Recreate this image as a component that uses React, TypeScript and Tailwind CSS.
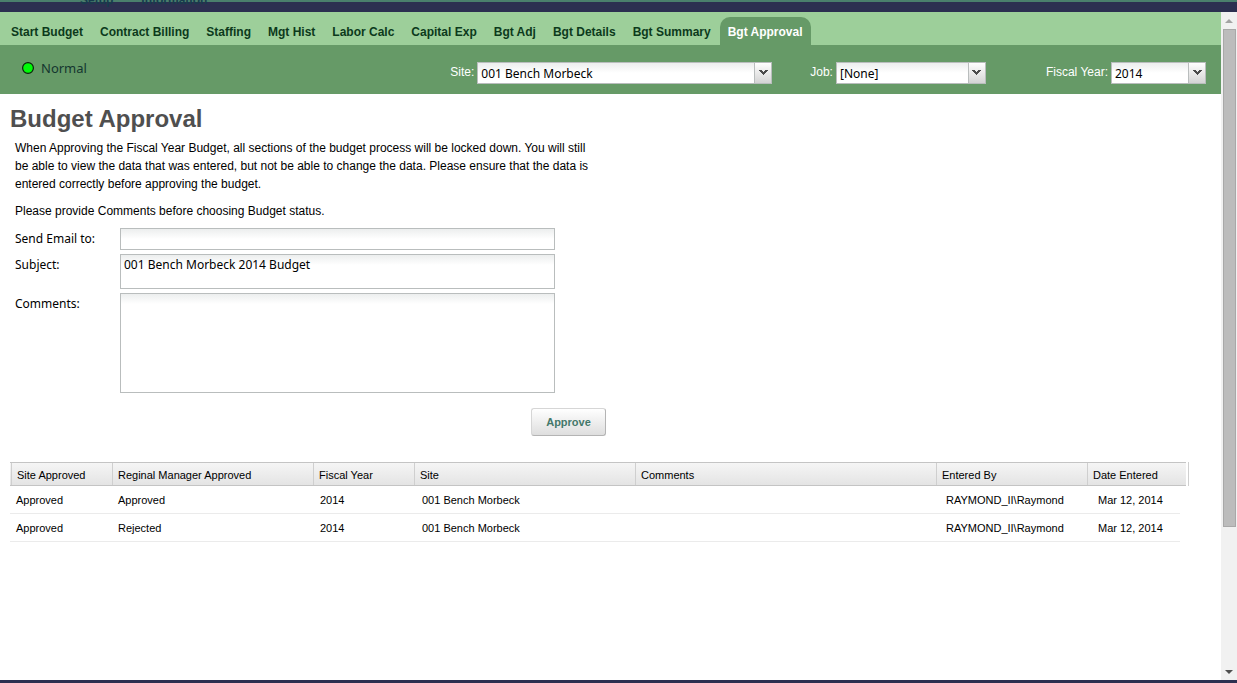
import { useState, type ReactNode } from "react";

const TABS = [
  "Start Budget",
  "Contract Billing",
  "Staffing",
  "Mgt Hist",
  "Labor Calc",
  "Capital Exp",
  "Bgt Adj",
  "Bgt Details",
  "Bgt Summary",
  "Bgt Approval",
];

const ROWS = [
  { site: "Approved", manager: "Approved" },
  { site: "Approved", manager: "Rejected" },
];

const FIELD =
  "block w-full resize-none border border-[#b9bdbd] bg-white bg-linear-to-b from-[#eceeee] to-white to-[10px] px-[3px] font-['Noto_Sans',sans-serif] text-[12px] text-black outline-none";

function Picker({ id, label, value, width }: { id: string; label: string; value: string; width: string }) {
  return (
    <div className="flex items-center gap-[3px]">
      <label htmlFor={id} className="pb-[2px] text-[12px] leading-4 text-white">
        {label}
      </label>
      <div className={`relative ${width}`}>
        <select
          id={id}
          defaultValue={value}
          className="block h-[22px] w-full appearance-none border border-[#b9bdbd] bg-white bg-linear-to-b from-[#eceeee] to-white to-[10px] pt-px pr-5 pl-[3px] font-['Noto_Sans',sans-serif] text-[12px] text-black outline-none"
        >
          <option>{value}</option>
        </select>
        <span className="pointer-events-none absolute inset-y-px right-px flex w-[17px] items-center justify-center border-l border-[#b9bdbd] bg-linear-to-b from-white to-[#d4d4d4]">
          <svg width="9" height="6" viewBox="0 0 9 6" shapeRendering="crispEdges" aria-hidden="true">
            <path d="M0 0h3v1h1v1h1v-1h1v-1h3v1h-1v1h-1v1h-1v1h-1v1h-1v-1h-1v-1h-1v-1h-1v-1h-1z" fill="#4a4a4a" />
          </svg>
        </span>
      </div>
    </div>
  );
}

function FormRow({ id, label, children }: { id: string; label: string; children: ReactNode }) {
  return (
    <>
      <label htmlFor={id} className="pt-[2px] font-['Noto_Sans',sans-serif] text-[12px] leading-[18px]">
        {label}
      </label>
      {children}
    </>
  );
}

function HeadCell({
  children,
  className = "",
  colSpan,
}: {
  children: ReactNode;
  className?: string;
  colSpan?: number;
}) {
  return (
    <th
      scope="col"
      colSpan={colSpan}
      className={`h-6 border-y border-[#c4c4c4] bg-linear-to-b from-[#f5f5f5] to-[#e4e4e4] p-0 text-left font-normal ${className}`}
    >
      <span className="block border-l border-[#cfcfcf] pt-[2px] pl-[5px] leading-5">{children}</span>
    </th>
  );
}

function Scrollbar() {
  return (
    <div className="flex w-4 shrink-0 flex-col bg-[#f1f1f1]" aria-hidden="true">
      <div className="flex h-[17px] items-center justify-center">
        <svg width="8" height="4" viewBox="0 0 8 4">
          <path d="M4 0L8 4H0z" fill="#a3a3a3" />
        </svg>
      </div>
      <div className="flex-1 pr-px pl-[2px]">
        <div className="h-[78.5%] border border-[#a8a8a8] bg-[#bcbcbc]" />
      </div>
      <div className="flex h-[17px] items-center justify-center">
        <svg width="8" height="4" viewBox="0 0 8 4">
          <path d="M0 0H8L4 4z" fill="#505050" />
        </svg>
      </div>
    </div>
  );
}

export default function App() {
  const [active, setActive] = useState("Bgt Approval");

  return (
    <div className="flex min-h-screen flex-col bg-white font-['Liberation_Sans',Arial,sans-serif] text-black">
      <header className="flex h-3 items-end gap-7 overflow-hidden bg-linear-to-b from-[#4a7f6c] from-[2px] to-[#2c2f50] to-[2px] pb-1 pl-20 text-[12px] font-bold leading-4 text-[#173c4c]">
        <span>Setup</span>
        <span>Information</span>
      </header>

      <div className="flex flex-1">
        <div className="min-w-0 flex-1">
          <nav className="flex h-[33px] items-end gap-px bg-[#9dcf9a] pl-[3px]">
            {TABS.map((tab) => (
              <a
                key={tab}
                href="#"
                onClick={() => setActive(tab)}
                className={`flex h-7 items-center rounded-t-[10px] px-2 pt-[2px] text-[12px] font-bold leading-4 whitespace-nowrap ${
                  tab === active ? "bg-[#669a67] text-white" : "text-[#0c3a1c]"
                }`}
              >
                {tab}
              </a>
            ))}
          </nav>

          <div className="flex h-[49px] items-center bg-[#669a67] pr-[15px] pl-[22px]">
            <div className="flex items-center gap-[7px] pb-1 font-['Noto_Sans',sans-serif] text-[13px] leading-4 text-[#14362f]">
              <svg width="12" height="12" viewBox="0 0 12 12" aria-hidden="true">
                <circle cx="6" cy="6" r="5.4" fill="#00fb08" stroke="#0b220b" strokeWidth="1.2" />
              </svg>
              Normal
            </div>
            <div className="ml-auto flex items-center pt-[7px]">
              <Picker id="site" label="Site:" value="001 Bench Morbeck" width="w-[295px]" />
              <div className="w-[38px]" />
              <Picker id="job" label="Job:" value="[None]" width="w-[150px]" />
              <div className="w-[60px]" />
              <Picker id="year" label="Fiscal Year:" value="2014" width="w-[95px]" />
            </div>
          </div>

          <main className="pr-8 pl-[10px]">
            <h1 className="pt-[10px] text-[24px] font-bold leading-[30px] text-[#4f4f4f]">Budget Approval</h1>
            <div className="max-w-[590px] pt-[5px] pl-[5px] text-[12px] leading-[18px]">
              <p>
                When Approving the Fiscal Year Budget, all sections of the budget process will be locked down. You will
                still be able to view the data that was entered, but not be able to change the data. Please ensure that
                the data is entered correctly before approving the budget.
              </p>
              <p className="pt-[9px]">Please provide Comments before choosing Budget status.</p>
            </div>

            <form className="max-w-[596px] pt-2" onSubmit={(e) => e.preventDefault()}>
              <div className="grid grid-cols-[105px_435px] items-start gap-y-1 pl-[5px]">
                <FormRow id="email" label="Send Email to:">
                  <input id="email" type="text" className={`${FIELD} h-[22px]`} />
                </FormRow>
                <FormRow id="subject" label="Subject:">
                  <textarea
                    id="subject"
                    defaultValue="001 Bench Morbeck 2014 Budget"
                    className={`${FIELD} h-[35px] pt-px leading-[18px]`}
                  />
                </FormRow>
                <FormRow id="comments" label="Comments:">
                  <textarea id="comments" className={`${FIELD} h-[100px] pt-px leading-[18px]`} />
                </FormRow>
              </div>
              <div className="flex justify-end pt-[15px]">
                <button
                  type="submit"
                  className="h-7 w-[75px] rounded-[3px] border border-[#d6d6d6] border-r-[#b4b4b4] border-b-[#b4b4b4] bg-linear-to-b from-white to-[#dedede] text-[11px] font-bold text-[#44786a]"
                >
                  Approve
                </button>
              </div>
            </form>

            <table className="mt-[26px] w-full table-fixed border-separate border-spacing-0 text-[11px]">
              <colgroup>
                <col className="w-[102px]" />
                <col className="w-[201px]" />
                <col className="w-[101px]" />
                <col className="w-[221px]" />
                <col />
                <col className="w-[151px]" />
                <col className="w-[93px]" />
                <col className="w-[6px]" />
                <col className="w-[3px]" />
              </colgroup>
              <thead>
                <tr>
                  <HeadCell className="pl-px">Site Approved</HeadCell>
                  <HeadCell>Reginal Manager Approved</HeadCell>
                  <HeadCell>Fiscal Year</HeadCell>
                  <HeadCell>Site</HeadCell>
                  <HeadCell>Comments</HeadCell>
                  <HeadCell>Entered By</HeadCell>
                  <HeadCell colSpan={2}>Date Entered</HeadCell>
                  <td className="border-r border-[#cfcfcf] p-0" />
                </tr>
              </thead>
              <tbody className="[&_td]:h-7 [&_td]:border-b [&_td]:border-[#ebebeb] [&_td]:pt-[2px] [&_td]:pr-0 [&_td]:pb-0">
                {ROWS.map((row, i) => (
                  <tr key={i}>
                    <td className="pl-[6px]">{row.site}</td>
                    <td className="pl-[6px]">{row.manager}</td>
                    <td className="pl-[7px]">2014</td>
                    <td className="pl-2">001 Bench Morbeck</td>
                    <td />
                    <td className="pl-[10px]">RAYMOND_II\Raymond</td>
                    <td className="pl-[11px]">Mar 12, 2014</td>
                  </tr>
                ))}
              </tbody>
            </table>
          </main>
        </div>
        <Scrollbar />
      </div>

      <footer className="h-[3px] bg-[#2c2f50]" />
    </div>
  );
}
